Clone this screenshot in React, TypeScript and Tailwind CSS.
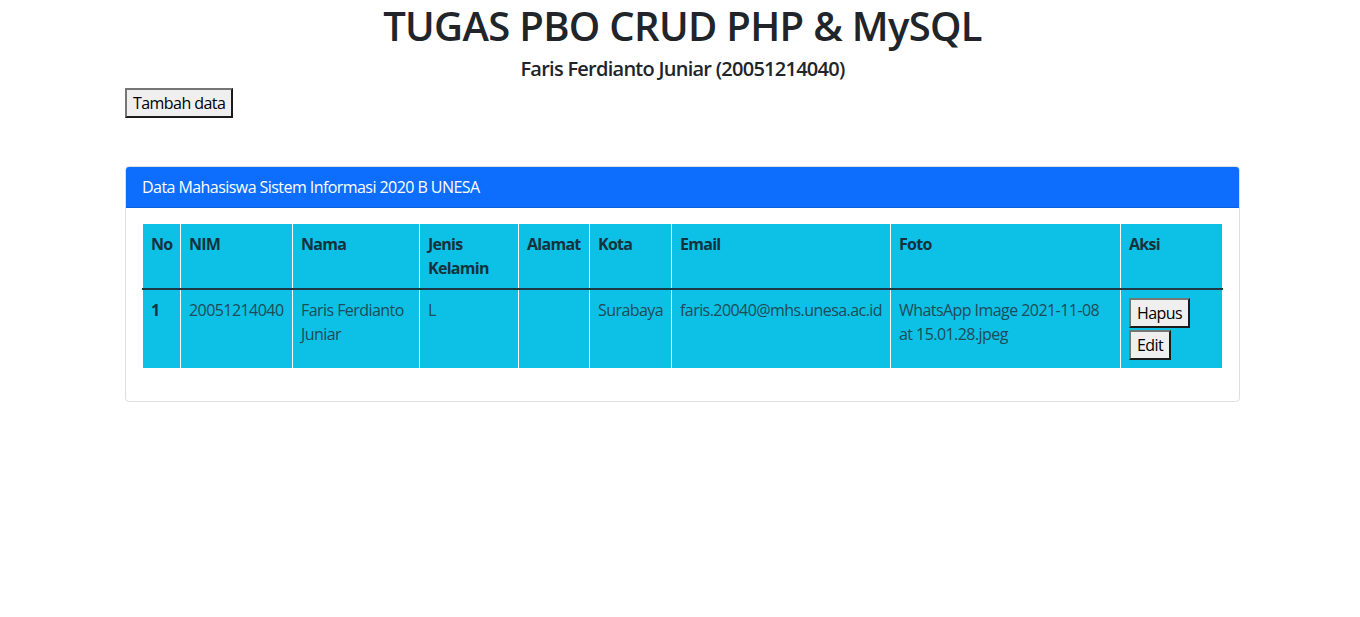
import React from "react";

const btn =
  "bg-[#efefef] text-[#000] text-[16px] leading-[24px] px-[6px] py-[1px] tracking-[-0.035em] border-2 border-t-[#767676] border-l-[#767676] border-b-[#1b1b1b] border-r-[#1b1b1b]";

const cols = [38, 112, 127, 99, 71, 82, 219, 230, 102];
const heads = ["No", "NIM", "Nama", "Jenis Kelamin", "Alamat", "Kota", "Email", "Foto", "Aksi"];

const td = "align-top p-[8px] border-x border-white";

export default function App() {
  return (
    <div
      className="min-h-[617px] bg-white text-[#212529] text-[16px] leading-[24px] tracking-[-0.035em]"
      style={{ fontFamily: '"Open Sans", "Noto Sans", sans-serif' }}
    >
      <div className="w-[1115px] ml-[125px]">
        <h1 className="text-center text-[40px] leading-[48px] font-semibold tracking-[-0.017em] pt-[2px] mb-[6px]">
          TUGAS PBO CRUD PHP &amp; MySQL
        </h1>
        <h5 className="text-center text-[20px] leading-[24px] font-semibold tracking-[-0.037em] pt-[1px] mb-[7px]">
          Faris Ferdianto Juniar (20051214040)
        </h5>
        <button className={btn}>Tambah data</button>

        <div className="mt-[48px] border border-[rgba(0,0,0,0.125)] rounded-[4px] overflow-hidden">
          <div className="bg-[#0d6efd] text-white px-[16px] py-[8px] border-b border-[rgba(0,0,0,0.125)]">
            Data Mahasiswa Sistem Informasi 2020 B UNESA
          </div>
          <div className="p-[16px] pb-[33px]">
            <table className="w-[1080px] table-fixed border-collapse bg-[#0dc1e6] text-[#1f4a57]">
              <colgroup>
                {cols.map((w, i) => (
                  <col key={i} style={{ width: w }} />
                ))}
              </colgroup>
              <thead>
                <tr className="border-b-2 border-b-[#1c3a45]">
                  {heads.map((h, i) => (
                    <th
                      key={i}
                      className="text-left align-top font-bold p-[8px] border-x border-white text-[#13323d] tracking-[-0.045em]"
                    >
                      {h === "Jenis Kelamin" ? (
                        <>
                          Jenis
                          <br />
                          Kelamin
                        </>
                      ) : (
                        h
                      )}
                    </th>
                  ))}
                </tr>
              </thead>
              <tbody>
                <tr>
                  <td className={`${td} font-bold text-[#13323d]`}>1</td>
                  <td className={td}>20051214040</td>
                  <td className={td}>Faris Ferdianto Juniar</td>
                  <td className={td}>L</td>
                  <td className={td}></td>
                  <td className={td}>Surabaya</td>
                  <td className={`${td} whitespace-nowrap`}>faris.20040@mhs.unesa.ac.id</td>
                  <td className={td}>WhatsApp Image 2021-11-08 at 15.01.28.jpeg</td>
                  <td className={td}>
                    <div className="flex flex-col items-start gap-[2px]">
                      <button className={btn}>Hapus</button>
                      <button className={btn}>Edit</button>
                    </div>
                  </td>
                </tr>
              </tbody>
            </table>
          </div>
        </div>
      </div>
    </div>
  );
}
